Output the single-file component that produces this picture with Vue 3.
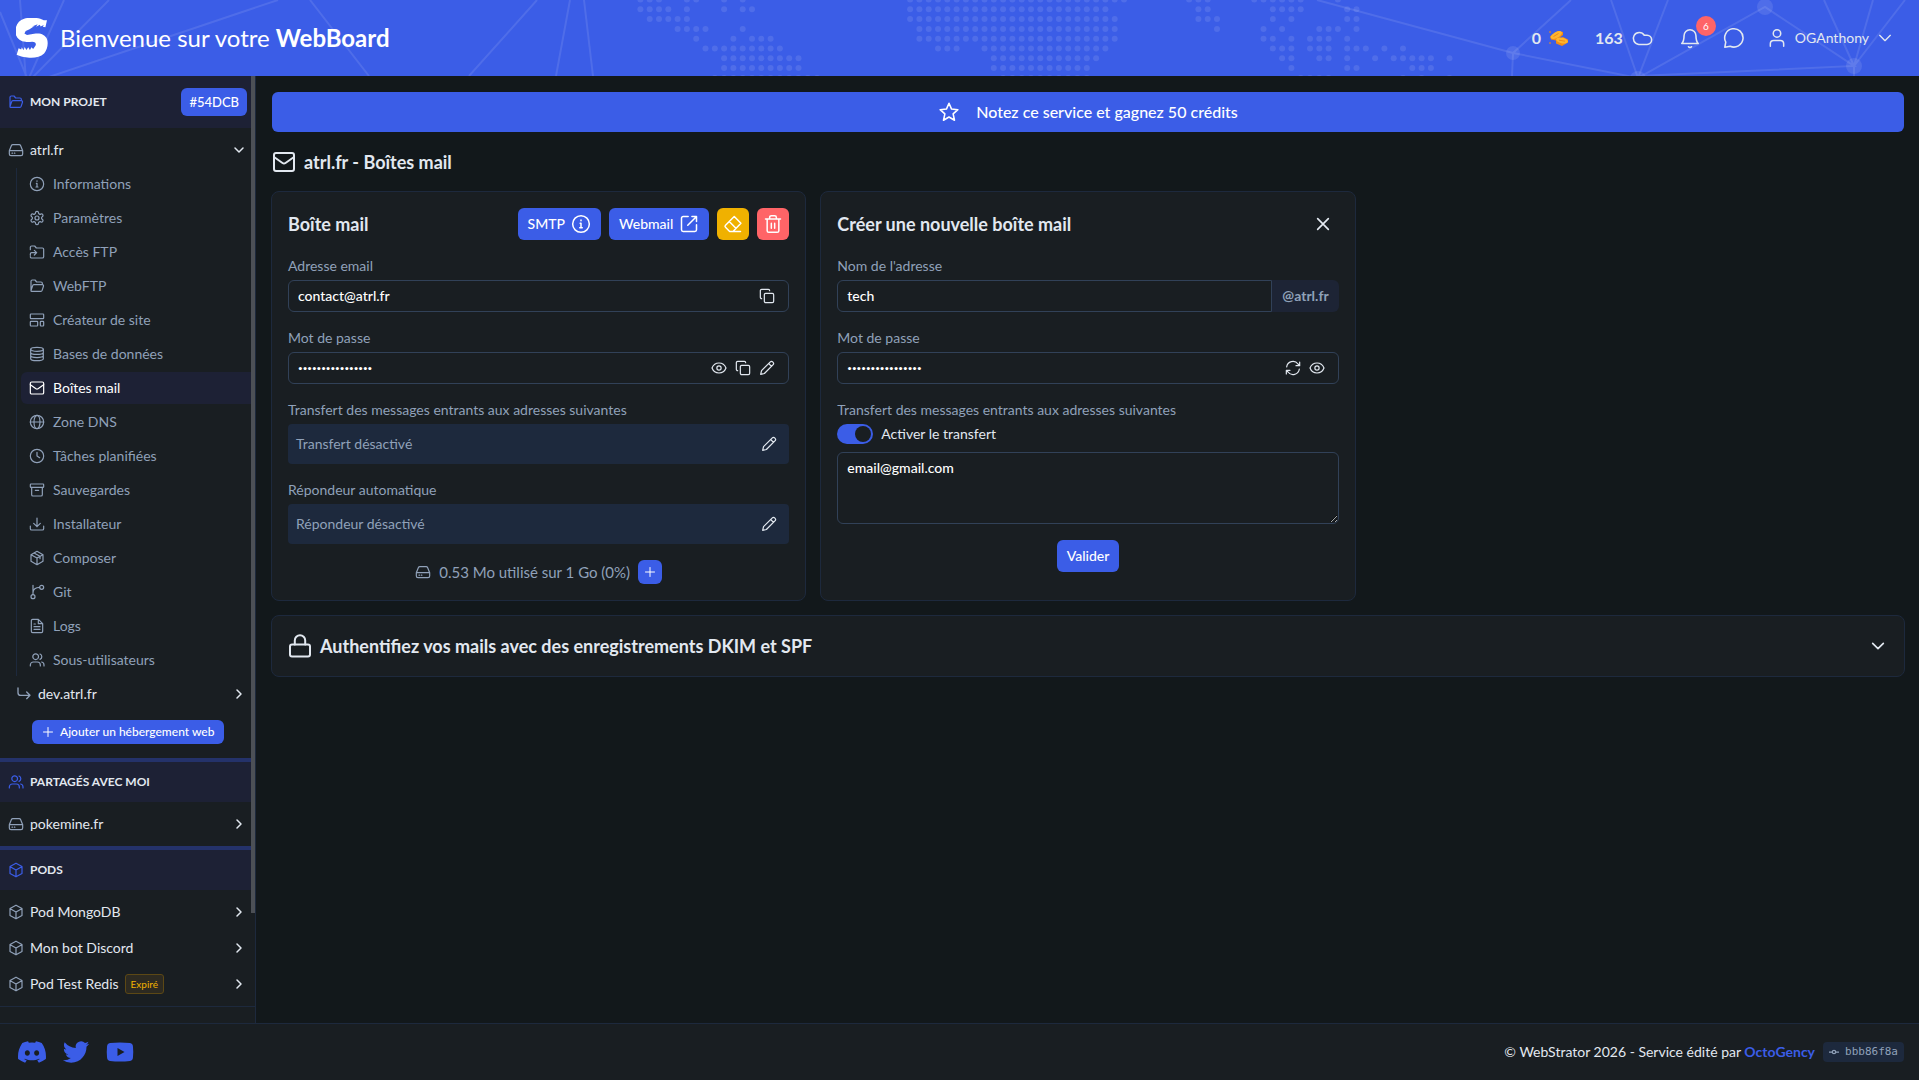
<script setup>
import { h, ref } from "vue";

// Stroke icons, drawn on a 24x24 grid
const icons = {
  folder: '<path d="M3 19V5a2 2 0 0 1 2-2h4l2.5 3H18a2 2 0 0 1 2 2v2M3 19l2.4-7.4A2 2 0 0 1 7.3 10H20a1.8 1.8 0 0 1 1.7 2.4l-2 6.2A2 2 0 0 1 17.8 20H4a1 1 0 0 1-1-1z"/>',
  drive: '<path d="M2 13l3-7.5A2.5 2.5 0 0 1 7.3 4h9.4A2.5 2.5 0 0 1 19 5.5l3 7.5v5a2.5 2.5 0 0 1-2.5 2.5h-15A2.5 2.5 0 0 1 2 18zM2 13h20M6 16.8h.8M9.5 16.8h.8"/>',
  info: '<circle cx="12" cy="12" r="10"/><path d="M12 11v5.5M12 7.3v.7M11 11h1M10.5 16.5h3"/>',
  gear: '<path d="M12.22 2h-.44a2 2 0 0 0-2 2v.18a2 2 0 0 1-1 1.73l-.43.25a2 2 0 0 1-2 0l-.15-.08a2 2 0 0 0-2.73.73l-.22.38a2 2 0 0 0 .73 2.73l.15.1a2 2 0 0 1 1 1.72v.51a2 2 0 0 1-1 1.74l-.15.09a2 2 0 0 0-.73 2.73l.22.38a2 2 0 0 0 2.73.73l.15-.08a2 2 0 0 1 2 0l.43.25a2 2 0 0 1 1 1.73V20a2 2 0 0 0 2 2h.44a2 2 0 0 0 2-2v-.18a2 2 0 0 1 1-1.73l.43-.25a2 2 0 0 1 2 0l.15.08a2 2 0 0 0 2.73-.73l.22-.39a2 2 0 0 0-.73-2.73l-.15-.08a2 2 0 0 1-1-1.74v-.5a2 2 0 0 1 1-1.74l.15-.09a2 2 0 0 0 .73-2.73l-.22-.38a2 2 0 0 0-2.73-.73l-.15.08a2 2 0 0 1-2 0l-.43-.25a2 2 0 0 1-1-1.73V4a2 2 0 0 0-2-2z"/><circle cx="12" cy="12" r="3"/>',
  folderIn: '<path d="M2 8.5V5a2 2 0 0 1 2-2h4.5L11 6h9a2 2 0 0 1 2 2v11a2 2 0 0 1-2 2H4a2 2 0 0 1-2-2M2 17v-2a2 2 0 0 1 2-2h7M8 9.5l3.5 3.5L8 16.5"/>',
  layout: '<rect x="2" y="3" width="20" height="7" rx="1"/><rect x="2" y="14" width="11" height="7" rx="1"/><rect x="17" y="14" width="5" height="7" rx="1"/>',
  database: '<ellipse cx="12" cy="5" rx="9.5" ry="3"/><path d="M2.5 5v14c0 1.7 4.3 3 9.5 3s9.5-1.3 9.5-3V5M2.5 9.7c0 1.7 4.3 3 9.5 3s9.5-1.3 9.5-3M2.5 14.4c0 1.7 4.3 3 9.5 3s9.5-1.3 9.5-3"/>',
  mail: '<rect x="2" y="3" width="20" height="18" rx="2"/><path d="M2 7l8.5 6a2.6 2.6 0 0 0 3 0L22 7"/>',
  globe: '<circle cx="12" cy="12" r="10"/><ellipse cx="12" cy="12" rx="4.5" ry="10"/><path d="M2 12h20"/>',
  clock: '<circle cx="12" cy="12" r="10"/><path d="M12 6.5V12l4 2.5"/>',
  archive: '<rect x="2" y="3" width="20" height="5" rx="1"/><path d="M4 8v11a2 2 0 0 0 2 2h12a2 2 0 0 0 2-2V8M9.5 12.5h5"/>',
  download: '<path d="M12 3v13M7 11l5 5 5-5M2 15v4a2 2 0 0 0 2 2h16a2 2 0 0 0 2-2v-4"/>',
  parcel: '<path d="M12 2l9 5v10l-9 5-9-5V7zM3 7l9 5 9-5M12 12v10M7.5 4.5l9 5v3.5"/>',
  cube: '<path d="M12 1.8l9 5v10.4l-9 5-9-5V6.8zM3.3 7L12 12l8.7-5M12 12v10"/>',
  git: '<circle cx="6" cy="19" r="3"/><circle cx="19" cy="5" r="3"/><path d="M6 2v14M16 5c-6 0-10 3-10 8"/>',
  file: '<path d="M14 2H5.5a2 2 0 0 0-2 2v16a2 2 0 0 0 2 2h13a2 2 0 0 0 2-2V8.5zM14 2v6.5h6.5M7.5 13h9M7.5 17h9M7.5 9h2"/>',
  users: '<circle cx="10" cy="7" r="4.3"/><path d="M2 21v-1.5A4.5 4.5 0 0 1 6.5 15h6a4.5 4.5 0 0 1 4.5 4.5V21M16.5 3a4.3 4.3 0 0 1 0 8M19 15a4.5 4.5 0 0 1 3.5 4.5V21"/>',
  user: '<circle cx="12" cy="6.5" r="4.5"/><path d="M4 22v-3a4 4 0 0 1 4-4h8a4 4 0 0 1 4 4v3"/>',
  turn: '<path d="M3 3v7a4 4 0 0 0 4 4h14M16 9l5 5-5 5"/>',
  down: '<path d="M4 8l8 8 8-8"/>',
  right: '<path d="M8 4l8 8-8 8"/>',
  plus: '<path d="M12 3v18M3 12h18"/>',
  close: '<path d="M4 4l16 16M20 4L4 20"/>',
  external: '<path d="M11 3H5a2 2 0 0 0-2 2v14a2 2 0 0 0 2 2h14a2 2 0 0 0 2-2v-6M15.5 3H21v6M21 3L10.5 13.5"/>',
  eraser: '<path d="M3 13.5L13.5 3l8 8L12 21H8l-5-5a1.8 1.8 0 0 1 0-2.5zM7.5 9l8 8M8 21h13"/>',
  trash: '<path d="M3 6h18M8 6V4a2 2 0 0 1 2-2h4a2 2 0 0 1 2 2v2M5 6v14a2 2 0 0 0 2 2h10a2 2 0 0 0 2-2V6M10 11v6M14 11v6"/>',
  copy: '<rect x="8" y="8" width="14" height="14" rx="2"/><path d="M4 16a2 2 0 0 1-2-2V4a2 2 0 0 1 2-2h10a2 2 0 0 1 2 2"/>',
  eye: '<path d="M1.5 12C3.5 7 7.5 4.5 12 4.5S20.5 7 22.5 12c-2 5-6 7.5-10.5 7.5S3.5 17 1.5 12z"/><circle cx="12" cy="12" r="3.2"/>',
  pencil: '<path d="M2.5 21.5l1.3-5.6L16.6 3.1a3 3 0 0 1 4.3 4.3L8.1 20.2zM14.5 5.2l4.3 4.3"/>',
  refresh: '<path d="M2.5 10.5A9.5 9.5 0 0 1 19.5 6L22 8.5M22 3v5.5h-5.5M21.5 13.5A9.5 9.5 0 0 1 4.5 18L2 15.5M2 21v-5.5h5.5"/>',
  lock: '<rect x="2" y="10.5" width="20" height="12" rx="2"/><path d="M6.8 10.5V6.5a5.2 5.2 0 0 1 10.4 0v4"/>',
  star: '<path d="M12 2.5l2.8 6.3 6.9.7-5.2 4.6 1.5 6.9-6-3.5-6 3.5 1.5-6.9-5.2-4.6 6.9-.7z"/>',
  cloud: '<path d="M17.5 19h-9A6.5 6.5 0 1 1 14.5 9h3a5 5 0 0 1 0 10z"/>',
  bell: '<path d="M3 18c2-2 2.5-4 2.5-8.5a6.5 6.5 0 0 1 13 0C18.5 14 19 16 21 18zM10.3 21.5a2 2 0 0 0 3.4 0"/>',
  chat: '<path d="M7.8 21A10 10 0 1 0 3 16.5L2 22z"/>',
  commit: '<circle cx="12" cy="12" r="4"/><path d="M0 12h8M16 12h8"/>',
};

const Icon = (props) =>
  h("svg", { class: "icon", viewBox: "0 0 24 24", "aria-hidden": "true", innerHTML: icons[props.name] });
Icon.props = ["name"];

const menu = [
  { icon: "info", label: "Informations" },
  { icon: "gear", label: "Paramètres" },
  { icon: "folderIn", label: "Accès FTP" },
  { icon: "folder", label: "WebFTP" },
  { icon: "layout", label: "Créateur de site" },
  { icon: "database", label: "Bases de données" },
  { icon: "mail", label: "Boîtes mail", active: true },
  { icon: "globe", label: "Zone DNS" },
  { icon: "clock", label: "Tâches planifiées" },
  { icon: "archive", label: "Sauvegardes" },
  { icon: "download", label: "Installateur" },
  { icon: "parcel", label: "Composer" },
  { icon: "git", label: "Git" },
  { icon: "file", label: "Logs" },
  { icon: "users", label: "Sous-utilisateurs" },
];

const pods = [
  { label: "Pod MongoDB" },
  { label: "Mon bot Discord" },
  { label: "Pod Test Redis", expired: true },
];

// Dotted world map of the header: [first, last] columns for each row
const mapRows = [
  [[0, 2], [5, 6], [9, 9], [11, 11], [29, 52], [59, 61], [66, 71], [75, 75]],
  [[0, 3], [5, 5], [9, 9], [11, 12], [29, 50], [60, 61], [68, 71], [76, 77]],
  [[1, 5], [29, 51], [60, 62], [68, 68], [70, 70], [76, 77]],
  [[4, 7], [11, 11], [30, 51], [62, 62], [67, 67], [69, 69], [73, 75], [77, 77]],
  [[6, 6], [10, 10], [12, 14], [30, 51], [67, 68], [70, 70], [72, 74], [76, 76]],
  [[7, 15], [32, 34], [37, 50], [68, 70], [72, 74], [76, 78], [80, 80], [82, 82]],
  [[9, 17], [38, 49], [69, 70], [73, 74], [76, 76], [79, 79], [81, 85], [87, 87]],
  [[9, 17], [38, 48], [70, 70], [76, 77], [83, 85]],
  [[8, 19], [39, 48], [71, 74], [82, 82], [84, 84], [87, 87]],
];
const dots = mapRows.flatMap((ranges, row) =>
  ranges.flatMap(([from, to]) =>
    Array.from({ length: to - from + 1 }, (_, i) => ({ x: 640.4 + (from + i) * 9.3, y: row * 9.8 - 0.5 }))
  )
);

const email = ref("contact@atrl.fr");
const password = ref("Xk29!fGh7Lq0pRtz");
const newName = ref("tech");
const newPassword = ref("m4Qw8sZx1Cv6Bn3K");
const forward = ref(true);
const forwardTo = ref("email@gmail.com");
</script>

<template>
  <div class="page">
    <header class="topbar">
      <svg class="pattern" viewBox="0 0 1919 76" preserveAspectRatio="xMidYMid slice" aria-hidden="true">
        <path d="M0 12L28 80M20 0L26 80M64 0L28 80M109 0L30 80M278 0L40 80M310 0L369 76M537 0L469 76M570 0L556 76M584 0L593 76" />
        <path d="M1317 0L1513 53L1638 78M1571 0L1513 53L1512 76M1611 0L1638 78L1668 0M1638 78L1765 7L1854 66L1638 76M1824 0L1854 66L1873 0M1905 0L1854 66V76" />
        <g class="nodes">
          <circle cx="1513" cy="53" r="7" />
          <circle cx="1638" cy="79" r="8" />
          <circle cx="1765" cy="7" r="8" />
          <circle cx="1854" cy="66" r="8" />
          <circle v-for="(d, i) in dots" :key="i" :cx="d.x" :cy="d.y" r="3" />
        </g>
      </svg>
      <a class="brand" href="#">
        <svg class="logo" viewBox="46 52 99 124" aria-hidden="true">
          <path d="M142 59l-5 22-8-2 3-5-10 4-2-5-12 6 5-8-19 8 9-2-15 10-12 5-4 8 8 5 22-4c18-4 34 2 40 16 5 14 1 34-9 45-11 11-28 14-46 13-15-1-30-4-39-9l6-20 8 4 2-7 5 9 4-10 5 9 6-8 5 8 5-8 5 5 5-7c4-4 5-9 1-13-7-5-18 0-30-2-18-3-31-14-31-32 0-20 10-35 27-40 19-5 44-4 61 5z" />
        </svg>
        <h1>Bienvenue sur votre <strong>WebBoard</strong></h1>
      </a>
      <nav class="tools">
        <a class="count" href="#">
          0
          <svg class="coins" viewBox="0 0 20 16" aria-hidden="true">
            <path fill="#f28b16" d="M1 6.5L9 1l5 1v3l-7 5.5-5-1zM7 10l7-3 5 2.5v3L13 16l-6-2.5z" />
            <ellipse fill="#ffb52e" cx="7.3" cy="5" rx="6.2" ry="3" transform="rotate(-30 7.3 5)" />
            <ellipse fill="#ffb52e" cx="13" cy="10.5" rx="6" ry="2.7" transform="rotate(12 13 10.5)" />
            <path stroke="#f28b16" stroke-width="1" d="M4.5 6.5l5-3M10 10.2l6 1M1 1v2M1 12v2" />
          </svg>
        </a>
        <a class="count" href="#">163 <Icon name="cloud" class="md" /></a>
        <button class="bell" type="button" aria-label="Notifications">
          <Icon name="bell" class="md" />
          <span class="bubble">6</span>
        </button>
        <button type="button" aria-label="Messages"><Icon name="chat" class="md" /></button>
        <button class="account" type="button">
          <Icon name="user" class="lg" />
          OGAnthony
          <Icon name="down" class="caret" />
        </button>
      </nav>
    </header>

    <aside class="sidebar">
      <div class="scroll-thumb"></div>
      <div class="section first">
        <Icon name="folder" />
        <h2>MON PROJET</h2>
        <button class="btn tag" type="button">#54DCB</button>
      </div>
      <nav class="group">
        <a class="row" href="#"><Icon name="drive" /><span>atrl.fr</span><Icon name="down" class="arrow" /></a>
        <ul class="submenu">
          <li v-for="item in menu" :key="item.label">
            <a href="#" :class="{ active: item.active }"><Icon :name="item.icon" />{{ item.label }}</a>
          </li>
        </ul>
        <a class="row sub" href="#"><Icon name="turn" class="turn" /><span>dev.atrl.fr</span><Icon name="right" class="arrow" /></a>
        <button class="btn add" type="button"><Icon name="plus" class="sm" />Ajouter un hébergement web</button>
      </nav>
      <div class="section">
        <Icon name="users" />
        <h2>PARTAGÉS AVEC MOI</h2>
      </div>
      <nav class="group shared">
        <a class="row" href="#"><Icon name="drive" /><span>pokemine.fr</span><Icon name="right" class="arrow" /></a>
      </nav>
      <div class="section">
        <Icon name="cube" />
        <h2>PODS</h2>
      </div>
      <nav class="group pods">
        <a v-for="pod in pods" :key="pod.label" class="row" href="#">
          <Icon name="cube" /><span>{{ pod.label }}</span>
          <em v-if="pod.expired" class="expired">Expiré</em>
          <Icon name="right" class="arrow" />
        </a>
      </nav>
    </aside>

    <main class="content">
      <button class="btn banner" type="button"><Icon name="star" class="md" />Notez ce service et gagnez 50 crédits</button>
      <h2 class="title"><Icon name="mail" class="xl" />atrl.fr - Boîtes mail</h2>

      <div class="cards">
        <section class="card">
          <div class="card-head">
            <h3>Boîte mail</h3>
            <button class="btn" type="button">SMTP<Icon name="info" class="lg" /></button>
            <a class="btn" href="#">Webmail<Icon name="external" class="lg" /></a>
            <button class="btn square warn" type="button" aria-label="Vider"><Icon name="eraser" class="lg" /></button>
            <button class="btn square danger" type="button" aria-label="Supprimer"><Icon name="trash" class="lg" /></button>
          </div>
          <div class="field">
            <label for="email">Adresse email</label>
            <div class="control">
              <input id="email" v-model="email" type="text" readonly />
              <button type="button" aria-label="Copier"><Icon name="copy" /></button>
            </div>
          </div>
          <div class="field">
            <label for="password">Mot de passe</label>
            <div class="control">
              <input id="password" v-model="password" type="password" readonly />
              <button type="button" aria-label="Afficher"><Icon name="eye" /></button>
              <button type="button" aria-label="Copier"><Icon name="copy" /></button>
              <button type="button" aria-label="Modifier"><Icon name="pencil" /></button>
            </div>
          </div>
          <div class="field">
            <p>Transfert des messages entrants aux adresses suivantes</p>
            <div class="notice">
              Transfert désactivé
              <button type="button" aria-label="Modifier le transfert"><Icon name="pencil" /></button>
            </div>
          </div>
          <div class="field">
            <p>Répondeur automatique</p>
            <div class="notice">
              Répondeur désactivé
              <button type="button" aria-label="Modifier le répondeur"><Icon name="pencil" /></button>
            </div>
          </div>
          <div class="usage">
            <Icon name="drive" />
            <span>0.53 Mo utilisé sur 1 Go (0%)</span>
            <button class="btn more" type="button" aria-label="Ajouter de l'espace"><Icon name="plus" class="sm" /></button>
          </div>
        </section>

        <form class="card" @submit.prevent>
          <div class="card-head">
            <h3>Créer une nouvelle boîte mail</h3>
            <button class="close" type="button" aria-label="Fermer"><Icon name="close" /></button>
          </div>
          <div class="field">
            <label for="new-name">Nom de l'adresse</label>
            <div class="joined">
              <div class="control"><input id="new-name" v-model="newName" type="text" /></div>
              <span class="suffix">@atrl.fr</span>
            </div>
          </div>
          <div class="field">
            <label for="new-password">Mot de passe</label>
            <div class="control">
              <input id="new-password" v-model="newPassword" type="password" />
              <button type="button" aria-label="Générer"><Icon name="refresh" /></button>
              <button type="button" aria-label="Afficher"><Icon name="eye" /></button>
            </div>
          </div>
          <div class="field">
            <label for="forward-to">Transfert des messages entrants aux adresses suivantes</label>
            <label class="switch"><input v-model="forward" type="checkbox" />Activer le transfert</label>
            <textarea id="forward-to" v-model="forwardTo"></textarea>
          </div>
          <button class="btn submit" type="submit">Valider</button>
        </form>
      </div>

      <button class="accordion" type="button">
        <Icon name="lock" class="xl" />
        <span>Authentifiez vos mails avec des enregistrements DKIM et SPF</span>
        <Icon name="down" class="bold" />
      </button>
    </main>

    <footer class="footer">
      <a href="#" aria-label="Discord">
        <svg class="social" viewBox="0 0 16 16"><path d="M13.545 2.907a13.2 13.2 0 0 0-3.257-1.011.05.05 0 0 0-.052.025c-.141.25-.297.577-.406.833a12.2 12.2 0 0 0-3.658 0 8 8 0 0 0-.412-.833.05.05 0 0 0-.052-.025c-1.125.194-2.22.534-3.257 1.011a.04.04 0 0 0-.021.018C.356 6.024-.213 9.047.066 12.032q.003.022.021.037a13.3 13.3 0 0 0 3.995 2.02.05.05 0 0 0 .056-.019q.463-.63.818-1.329a.05.05 0 0 0-.01-.059l-.018-.011a9 9 0 0 1-1.248-.595.05.05 0 0 1-.02-.066l.015-.019q.127-.095.248-.195a.05.05 0 0 1 .051-.007c2.619 1.196 5.454 1.196 8.041 0a.05.05 0 0 1 .053.007q.121.1.248.195a.05.05 0 0 1-.004.085 8 8 0 0 1-1.249.594.05.05 0 0 0-.03.03.05.05 0 0 0 .003.041c.24.465.515.909.817 1.329a.05.05 0 0 0 .056.019 13.2 13.2 0 0 0 4.001-2.02.05.05 0 0 0 .021-.037c.334-3.451-.559-6.449-2.366-9.106a.03.03 0 0 0-.02-.019m-8.198 7.307c-.789 0-1.438-.724-1.438-1.612s.637-1.613 1.438-1.613c.807 0 1.45.73 1.438 1.613 0 .888-.637 1.612-1.438 1.612m5.316 0c-.788 0-1.438-.724-1.438-1.612s.637-1.613 1.438-1.613c.807 0 1.451.73 1.438 1.613 0 .888-.631 1.612-1.438 1.612" /></svg>
      </a>
      <a href="#" aria-label="Twitter">
        <svg class="social" viewBox="0 0 16 17"><path d="M5.026 15c6.038 0 9.341-5.003 9.341-9.334q.002-.211-.006-.422A6.7 6.7 0 0 0 16 3.542a6.7 6.7 0 0 1-1.889.518 3.3 3.3 0 0 0 1.447-1.817 6.5 6.5 0 0 1-2.087.793A3.286 3.286 0 0 0 7.875 6.03a9.32 9.32 0 0 1-6.767-3.429 3.29 3.29 0 0 0 1.018 4.382A3.3 3.3 0 0 1 .64 6.575v.045a3.29 3.29 0 0 0 2.632 3.218 3.2 3.2 0 0 1-.865.115 3 3 0 0 1-.614-.057 3.28 3.28 0 0 0 3.067 2.277A6.6 6.6 0 0 1 .78 13.58a6 6 0 0 1-.78-.045A9.34 9.34 0 0 0 5.026 15" /></svg>
      </a>
      <a href="#" aria-label="YouTube">
        <svg class="social" viewBox="0 0 28 28"><path fill-rule="evenodd" d="M4 5Q14 4 24 5Q27 5.5 27 9Q27.5 14 27 19Q27 22.5 24 23Q14 24 4 23Q1 22.5 1 19Q.5 14 1 9Q1 5.5 4 5zM11.5 10v8l7-4z" /></svg>
      </a>
      <p>© WebStrator 2026 - Service édité par <a href="#">OctoGency</a></p>
      <code><Icon name="commit" class="xs" />bbb86f8a</code>
    </footer>
  </div>
</template>

<style>
body {
  margin: 0;
  background: #12181b;
}
</style>

<style scoped>
.page {
  display: grid;
  grid-template: "top top" auto "side main" 1fr "foot foot" auto / 256px minmax(0, 1fr);
  min-height: 100vh;
  font: 14px/20px Lato, sans-serif;
  color: #e2e8f0;
}

.page * {
  box-sizing: border-box;
}

h1,
h2,
h3,
p,
ul {
  margin: 0;
  padding: 0;
}

a {
  color: inherit;
  text-decoration: none;
}

button {
  padding: 0;
  border: 0;
  background: none;
  color: inherit;
  font: inherit;
  display: flex;
  align-items: center;
}

.icon {
  width: 16px;
  height: 16px;
  flex: none;
  fill: none;
  stroke: currentColor;
  stroke-width: 1.8;
  stroke-linecap: round;
  stroke-linejoin: round;
}

.icon.xs {
  width: 10px;
  height: 10px;
  stroke-width: 3;
}

.icon.sm {
  width: 12px;
  height: 12px;
  stroke-width: 2;
}

.icon.md {
  width: 22px;
  height: 22px;
  stroke-width: 1.7;
}

.icon.lg {
  width: 20px;
  height: 20px;
}

.icon.xl {
  width: 24px;
  height: 24px;
  stroke-width: 2;
}

.icon.bold {
  stroke-width: 2.5;
}

.btn {
  height: 32px;
  padding: 0 10px;
  display: flex;
  align-items: center;
  justify-content: center;
  gap: 6px;
  border-radius: 6px;
  background: #3b5de7;
  color: #fff;
  font-weight: 500;
}

/* Header */
.topbar {
  grid-area: top;
  position: relative;
  height: 76px;
  padding: 0 26px 0 16px;
  display: flex;
  align-items: center;
  justify-content: space-between;
  background: #3b5de7;
}

.pattern {
  position: absolute;
  inset: 0;
  width: 100%;
  height: 100%;
  fill: none;
  stroke: rgba(255, 255, 255, 0.1);
  stroke-width: 2;
}

.nodes {
  fill: rgba(255, 255, 255, 0.1);
  stroke: none;
}

.brand {
  position: relative;
  display: flex;
  align-items: center;
  gap: 12px;
  color: #fff;
}

.logo {
  width: 32px;
  height: 40px;
  fill: #fff;
}

.brand h1 {
  font-size: 24px;
  line-height: 32px;
  font-weight: 400;
}

.tools {
  position: relative;
  display: flex;
  align-items: center;
  gap: 22px;
}

.count {
  margin-right: 4px;
  display: flex;
  align-items: center;
  gap: 8px;
  font-size: 16px;
  font-weight: 700;
}

.coins {
  width: 20px;
  height: 16px;
}

.bell {
  position: relative;
}

.bubble {
  position: absolute;
  left: 17px;
  bottom: 13px;
  width: 20px;
  border-radius: 10px;
  background: #ff6467;
  color: #fff;
  font-size: 10px;
  text-align: center;
}

.account {
  gap: 8px;
}

.caret {
  stroke-width: 2;
}

/* Sidebar */
.sidebar {
  grid-area: side;
  position: relative;
  border-right: 1px solid #1d293d;
  background: #191e22;
}

.scroll-thumb {
  position: absolute;
  top: 0;
  right: 0;
  bottom: 110px;
  width: 4px;
  background: #4c5056;
}

.section {
  height: 44px;
  padding: 0 8px;
  display: flex;
  align-items: center;
  gap: 6px;
  border-top: 4px solid #24326a;
  background: #1d2135;
}

.section.first {
  height: 52px;
  border-top: 0;
}

.section .icon {
  color: #3b5de7;
}

.section h2 {
  flex: 1;
  font-size: 12px;
  font-weight: 700;
}

.tag {
  height: 28px;
  padding: 0 8px;
  font-size: 13px;
}

.group {
  padding-top: 4px;
}

.row {
  height: 36px;
  padding: 0 10px 0 8px;
  display: flex;
  align-items: center;
  gap: 6px;
}

.row .icon {
  color: #90a1b9;
}

.row .arrow {
  width: 12px;
  height: 12px;
  margin-left: auto;
  color: #e2e8f0;
  stroke-width: 3;
}

.submenu {
  margin-left: 16px;
  padding: 0 0 0 4px;
  border-left: 1px solid #1d293d;
  list-style: none;
}

.submenu a {
  height: 32px;
  margin-bottom: 2px;
  padding-left: 8px;
  display: flex;
  align-items: center;
  gap: 8px;
  border-radius: 6px 0 0 6px;
  color: #90a1b9;
}

.submenu a.active {
  background: #1d2135;
  color: #fff;
}

.row.sub {
  height: 32px;
  padding-left: 16px;
}

.turn {
  stroke-width: 2;
}

.add {
  height: 24px;
  margin: 10px 0 14px 32px;
  font-size: 12px;
}

.shared {
  padding-bottom: 4px;
}

.pods {
  padding-bottom: 4px;
  border-bottom: 1px solid #1d293d;
}

.expired {
  height: 20px;
  padding: 0 5px;
  border: 1px solid #5c4815;
  border-radius: 3px;
  background: #2d2a21;
  color: #f0b100;
  font-size: 10px;
  font-style: normal;
  line-height: 18px;
}

/* Content */
.content {
  grid-area: main;
  padding: 16px 14px 16px 15px;
}

.banner {
  width: calc(100% - 2px);
  height: 40px;
  margin: 0 1px;
  gap: 16px;
  font-size: 16px;
}

.title {
  height: 59px;
  margin: 0 1px;
  display: flex;
  align-items: center;
  gap: 8px;
  font-size: 18px;
  font-weight: 700;
}

.cards {
  display: grid;
  grid-template-columns: repeat(3, minmax(0, 1fr));
  gap: 14px;
}

.card {
  padding: 16px;
  display: flex;
  flex-direction: column;
  gap: 16px;
  border: 1px solid #1d293d;
  border-radius: 8px;
  background: #191e22;
}

.card-head {
  display: flex;
  align-items: center;
  gap: 8px;
}

.card-head h3 {
  flex: 1;
  font-size: 18px;
  font-weight: 700;
}

.square {
  width: 32px;
  padding: 0;
}

.warn {
  background: #f0b100;
}

.danger {
  background: #ff6467;
}

.close {
  height: 32px;
  padding: 0 8px;
}

.close .icon {
  stroke-width: 2.5;
}

.field {
  display: flex;
  flex-direction: column;
  gap: 4px;
  color: #90a1b9;
}

.control {
  height: 32px;
  padding: 0 13px 0 9px;
  display: flex;
  align-items: center;
  gap: 8px;
  border: 1px solid #314158;
  border-radius: 6px;
  color: #e2e8f0;
}

.control input {
  flex: 1;
  min-width: 0;
  padding: 0;
  border: 0;
  outline: 0;
  background: none;
  color: #fff;
  font: inherit;
  font-weight: 500;
}

.control input[type="password"] {
  font-size: 8px;
}

.joined {
  display: flex;
}

.joined .control {
  flex: 1;
  border-radius: 6px 0 0 6px;
}

.suffix {
  padding: 0 10px;
  border-radius: 0 6px 6px 0;
  background: #1d2435;
  line-height: 32px;
  font-weight: 700;
}

.notice {
  height: 40px;
  padding: 0 12px 0 8px;
  display: flex;
  align-items: center;
  justify-content: space-between;
  border-radius: 4px;
  background: #1d293d;
}

.notice button {
  color: #e2e8f0;
}

.usage {
  display: flex;
  align-items: center;
  justify-content: center;
  gap: 8px;
  color: #90a1b9;
  font-size: 15px;
}

.more {
  width: 24px;
  height: 24px;
  padding: 0;
}

.switch {
  display: flex;
  align-items: center;
  gap: 8px;
  color: #e2e8f0;
}

.switch input {
  appearance: none;
  width: 36px;
  height: 20px;
  margin: 0;
  padding: 2px;
  border-radius: 10px;
  background: #314158;
}

.switch input::before {
  content: "";
  display: block;
  width: 16px;
  height: 16px;
  border-radius: 50%;
  background: #191e22;
}

.switch input:checked {
  background: #3b5de7;
}

.switch input:checked::before {
  margin-left: auto;
}

textarea {
  height: 72px;
  margin-top: 4px;
  padding: 5px 9px;
  border: 1px solid #314158;
  border-radius: 6px;
  outline: 0;
  background: none;
  color: #fff;
  font: inherit;
  font-weight: 500;
}

.submit {
  align-self: center;
}

.accordion {
  width: 100%;
  height: 62px;
  margin-top: 14px;
  padding: 0 18px 0 16px;
  gap: 8px;
  border: 1px solid #1d293d;
  border-radius: 8px;
  background: #191e22;
  font-size: 18px;
  font-weight: 700;
  text-align: left;
}

.accordion span {
  flex: 1;
}

/* Footer */
.footer {
  grid-area: foot;
  height: 57px;
  padding: 0 15px 0 18px;
  display: flex;
  align-items: center;
  gap: 16px;
  border-top: 1px solid #1d293d;
  background: #191e22;
}

.social {
  display: block;
  width: 28px;
  height: 28px;
  fill: #3b5de7;
}

.footer p {
  flex: 1;
  text-align: right;
}

.footer p a {
  color: #3b5de7;
  font-weight: 700;
}

code {
  height: 20px;
  margin-left: -8px;
  padding: 0 6px;
  display: flex;
  align-items: center;
  gap: 6px;
  border-radius: 4px;
  background: #1d293d;
  color: #90a1b9;
  font: 11px/20px "DejaVu Sans Mono", monospace;
}
</style>
